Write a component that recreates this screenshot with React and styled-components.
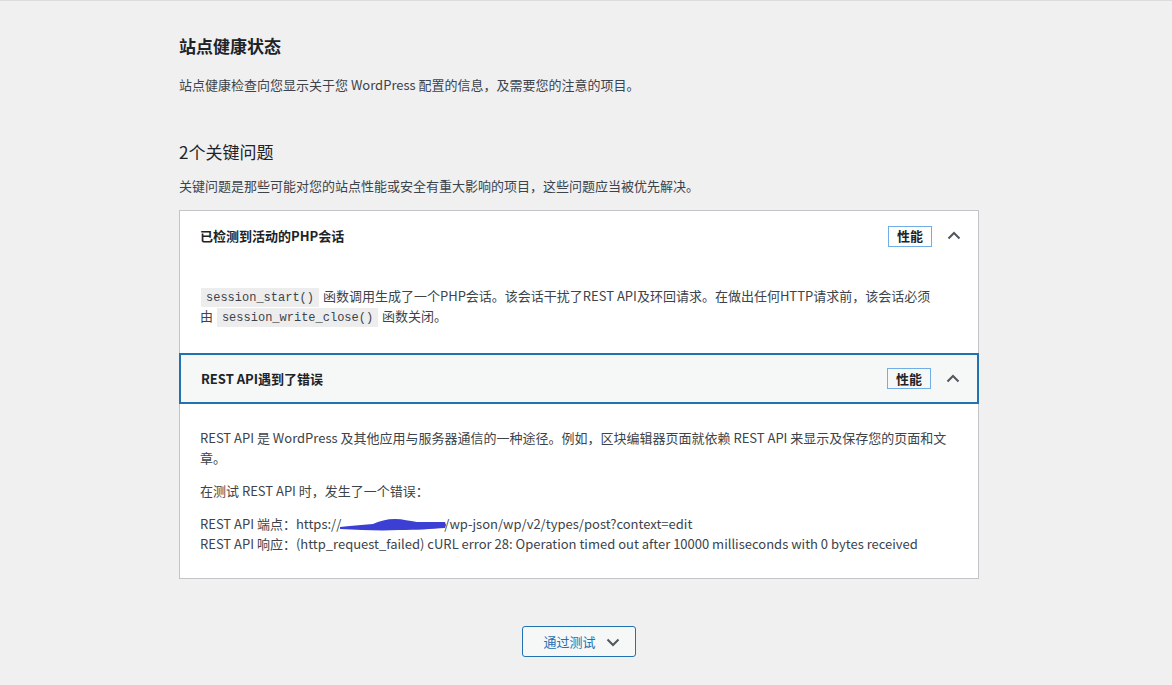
import React from "react";
import styled, { createGlobalStyle } from "styled-components";

const Global = createGlobalStyle`
  html, body { margin: 0; padding: 0; background: #f0f0f1; }
  body {
    font-family: "Noto Sans CJK SC", "Noto Sans", sans-serif;
    color: #3c434a;
    font-size: 13px;
    line-height: 20px;
  }
  * { box-sizing: border-box; }
`;

const Page = styled.div`
  min-height: 685px;
  border-top: 1px solid #dcdcde;
  padding: 0 194px 28px 179px;
`;

const Title = styled.h1`
  margin: 0;
  padding-top: 32px;
  font-size: 17px;
  line-height: 26px;
  font-weight: 700;
  color: #1d2327;
`;

const Lead = styled.p`
  margin: 16px 0 0;
`;

const SectionTitle = styled.h2`
  margin: 44px 0 0;
  font-size: 17px;
  line-height: 26px;
  font-weight: 400;
  color: #1d2327;
`;

const SectionLead = styled.p`
  margin: 11px 0 0;
`;

const Accordion = styled.div`
  margin-top: 14px;
  width: 800px;
  background: #fff;
  border: 1px solid #c3c4c7;
`;

const Trigger = styled.div`
  display: flex;
  align-items: center;
  height: ${(p) => (p.$focused ? "51px" : "50px")};
  padding: 0 16px 0 20px;
  background: ${(p) => (p.$focused ? "#f6f7f7" : "#fff")};
  border: solid ${(p) => (p.$focused ? "#2271b1" : "transparent")};
  border-width: ${(p) => (p.$focused ? "2px" : "0")};
  margin: ${(p) => (p.$focused ? "0 -1px" : "0")};
`;

const TriggerTitle = styled.span`
  flex: 1;
  font-size: 13px;
  font-weight: 700;
  color: #1d2327;
`;

const Badge = styled.span`
  display: inline-flex;
  align-items: center;
  height: 21px;
  padding: 0 8px;
  border: 1px solid #72aee6;
  font-size: 13px;
  font-weight: 700;
  color: #1d2327;
  margin-right: 14px;
`;

const Chevron = styled.svg`
  width: 16px;
  height: 16px;
  display: block;
`;

const Panel = styled.div`
  padding: ${(p) => p.$pad};
  display: flex;
  flex-direction: column;
  gap: 13px;
`;

const Para = styled.p`
  margin: 0;
`;

const Code = styled.code`
  font-family: "Liberation Mono", "DejaVu Sans Mono", monospace;
  font-size: 12px;
  line-height: 1;
  background: rgba(0, 0, 0, 0.07);
  padding: 3px 5px 2px;
  margin: 0 1px;
`;

const Redact = styled.svg`
  display: inline-block;
  vertical-align: -3px;
  width: 108px;
  height: 14px;
  margin: 0 -3px 0 -2px;
`;

const Footer = styled.div`
  display: flex;
  justify-content: center;
  width: 800px;
  margin-top: 47px;
`;

const Button = styled.button`
  display: inline-flex;
  align-items: center;
  gap: 9px;
  height: 31px;
  padding: 0 14px 0 20px;
  background: #f6f7f7;
  border: 1px solid #2271b1;
  border-radius: 3px;
  color: #2271b1;
  font-family: "Noto Sans CJK SC", "Noto Sans", sans-serif;
  font-size: 13px;
  cursor: pointer;
`;

const Up = () => (
  <Chevron viewBox="0 0 16 16">
    <path d="M2.5 10.5 L8 5 L13.5 10.5" fill="none" stroke="#50575e" strokeWidth="2" />
  </Chevron>
);

const Down = () => (
  <Chevron viewBox="0 0 16 16">
    <path d="M2.5 5.5 L8 11 L13.5 5.5" fill="none" stroke="#50575e" strokeWidth="2" />
  </Chevron>
);

const Item = ({ title, focused, children, pad }) => (
  <div>
    <Trigger $focused={focused}>
      <TriggerTitle>{title}</TriggerTitle>
      <Badge>性能</Badge>
      <Up />
    </Trigger>
    <Panel $pad={pad}>{children}</Panel>
  </div>
);

export default function App() {
  return (
    <>
      <Global />
      <Page>
        <Title>站点健康状态</Title>
        <Lead>站点健康检查向您显示关于您 WordPress 配置的信息，及需要您的注意的项目。</Lead>
        <SectionTitle>2个关键问题</SectionTitle>
        <SectionLead>关键问题是那些可能对您的站点性能或安全有重大影响的项目，这些问题应当被优先解决。</SectionLead>
        <Accordion>
          <Item title="已检测到活动的PHP会话" pad="25px 20px 27px">
            <Para>
              <Code>session_start()</Code> 函数调用生成了一个PHP会话。该会话干扰了REST API及环回请求。在做出任何HTTP请求前，该会话必须
              <br />由 <Code>session_write_close()</Code> 函数关闭。
            </Para>
          </Item>
          <Item title="REST API遇到了错误" focused pad="24px 20px 24px">
            <Para>
              REST API 是 WordPress 及其他应用与服务器通信的一种途径。例如，区块编辑器页面就依赖 REST API 来显示及保存您的页面和文
              <br />章。
            </Para>
            <Para>在测试 REST API 时，发生了一个错误：</Para>
            <Para>
              REST API 端点：https://
              <Redact viewBox="0 0 108 14">
                <path
                  d="M1 9 C10 8 22 7 34 6 C40 3 48 1 56 1 C64 1 70 3 78 4 L106 4 L107 7 L106 10 C92 11 78 12 60 12 C42 13 22 12 1 11 Z"
                  fill="#3b3fd4"
                />
              </Redact>
              /wp-json/wp/v2/types/post?context=edit
              <br />
              REST API 响应：(http_request_failed) cURL error 28: Operation timed out after 10000 milliseconds with 0 bytes received
            </Para>
          </Item>
        </Accordion>
        <Footer>
          <Button>
            通过测试
            <Down />
          </Button>
        </Footer>
      </Page>
    </>
  );
}
